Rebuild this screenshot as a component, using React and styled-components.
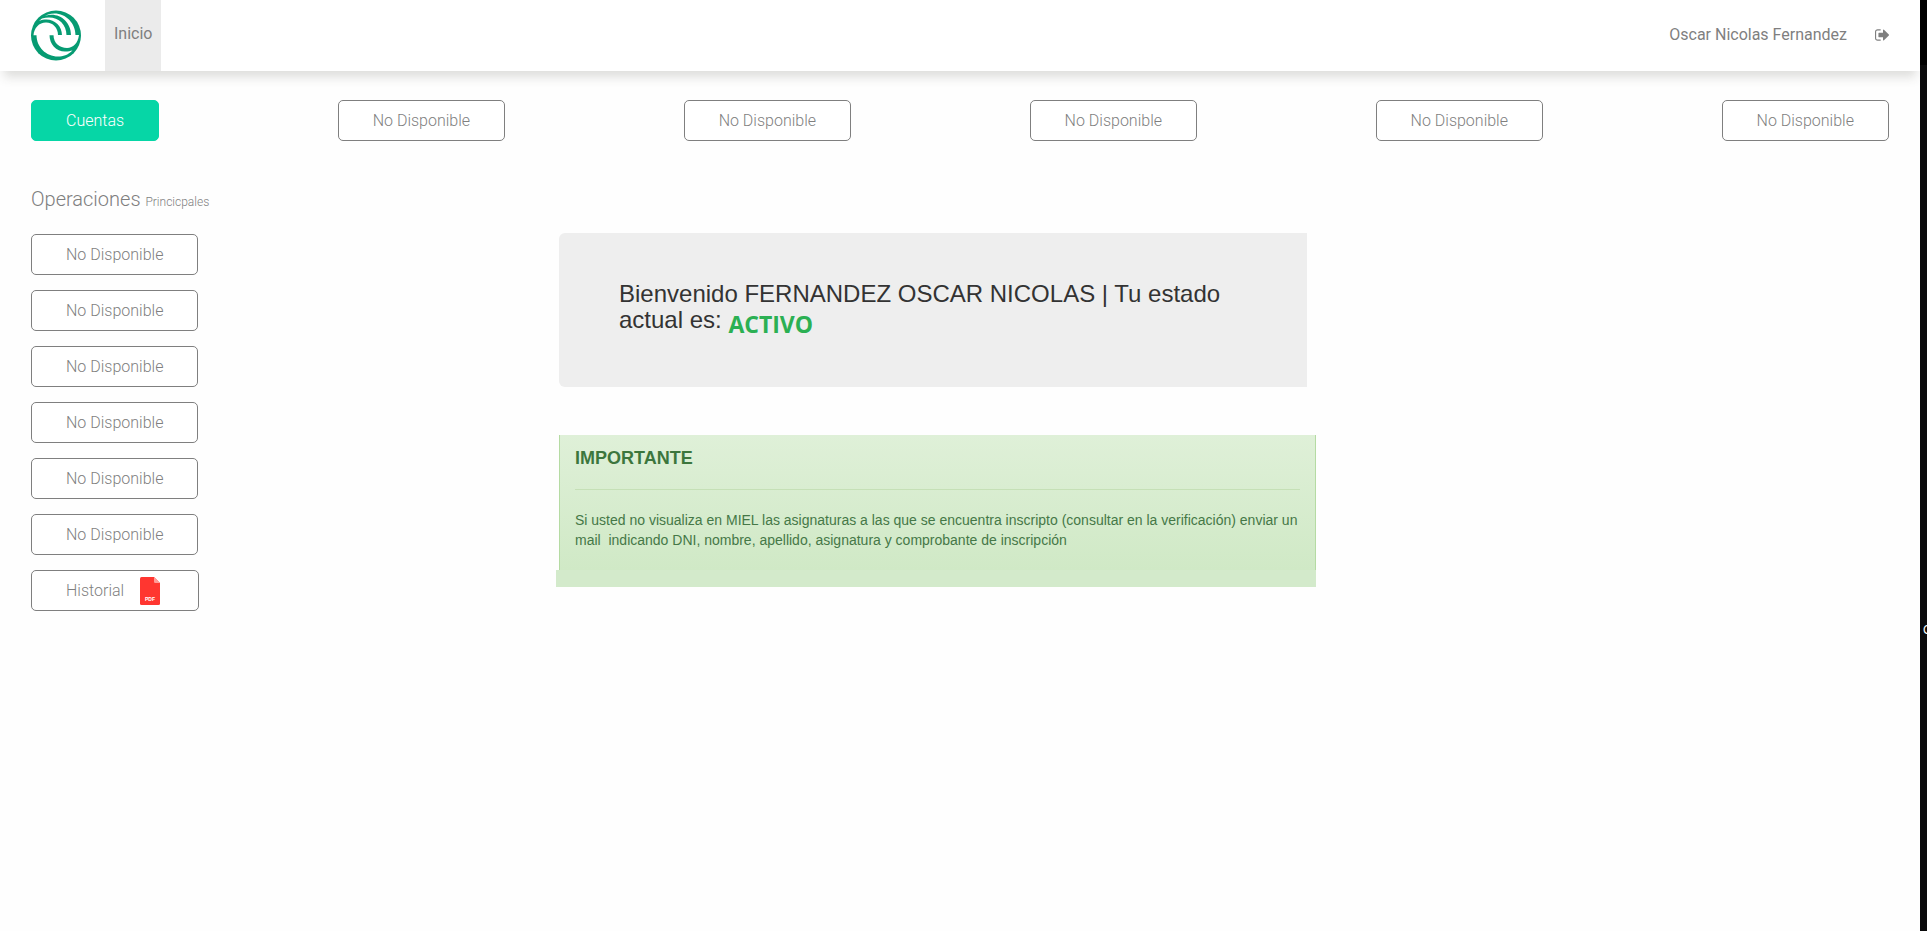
import React from "react";
import styled, { createGlobalStyle } from "styled-components";

const GlobalStyle = createGlobalStyle`
  *, *::before, *::after { box-sizing: border-box; }
  body { margin: 0; background: #fefefe; font-family: Roboto, "Liberation Sans", sans-serif; font-size: 16px; color: #7f7f7f; }
  h1, h2, p { margin: 0; font-weight: inherit; }
`;

const Screen = styled.div`
  display: grid;
  grid-template-columns: minmax(0, 1fr) 7px;
  min-height: 100vh;
`;

const Page = styled.div`
  min-width: 0;
`;

const EdgeStrip = styled.aside`
  overflow: hidden;
  padding: 620px 0 0 3px;
  background: linear-gradient(#000 65px, #0a0a0b 65px);
  color: #fff;
  font-family: "Liberation Sans", Arial, sans-serif;
  font-size: 12px;
  line-height: 20px;
`;

const Header = styled.header`
  display: flex;
  align-items: stretch;
  height: 71px;
  padding: 0 31px;
  background: #fff;
  box-shadow: 0 10px 10px -4px rgba(60, 60, 50, 0.17);
`;

const LogoLink = styled.a`
  display: flex;
  align-items: center;
  margin-right: 24px;
`;

const NavLink = styled.a`
  display: flex;
  align-items: center;
  padding: 0 9px 4px;
  background: ${(p) => (p.$active ? "#ebebeb" : "transparent")};
  color: inherit;
  text-decoration: none;
`;

const Session = styled.div`
  display: flex;
  align-items: center;
  gap: 28px;
  margin-left: auto;
  padding-bottom: 2px;
`;

const IconButton = styled.button`
  display: flex;
  padding: 0;
  border: 0;
  background: none;
  color: inherit;
  cursor: pointer;
`;

const Tabs = styled.nav`
  display: flex;
  justify-content: space-between;
  padding: 29px 31px 0;
`;

const Button = styled.button`
  display: flex;
  align-items: center;
  gap: 12px;
  height: 41px;
  padding: 0 34px;
  border: 1px solid ${(p) => (p.$primary ? "#06d6a6" : "#7f7f7f")};
  border-radius: 5px;
  background: ${(p) => (p.$primary ? "#06d6a6" : "#fff")};
  color: ${(p) => (p.$primary ? "#fff" : "#7f7f7f")};
  font: 300 16px/24px Roboto, "Liberation Sans", sans-serif;
  white-space: nowrap;
  cursor: pointer;
`;

const Body = styled.div`
  display: grid;
  grid-template-columns: 528px minmax(0, 757px);
  padding: 44px 31px 40px;
`;

const Sidebar = styled.section`
  display: flex;
  flex-direction: column;
  align-items: flex-start;
  gap: 15px;
`;

const SidebarTitle = styled.h2`
  margin-bottom: 3px;
  font-size: 20px;
  line-height: 28px;
  font-weight: 300;

  small {
    font-size: 12px;
  }
`;

const Content = styled.main`
  padding-top: 48px;
`;

const Welcome = styled.section`
  max-width: 748px;
  padding: 48px 60px 54px;
  border-radius: 6px 0 0 6px;
  background: #eee;
`;

const WelcomeText = styled.h1`
  color: #333;
  font: 400 24px/26px "Liberation Sans", Arial, sans-serif;
`;

const Status = styled.strong`
  position: relative;
  top: 5px;
  color: #2bb053;
  font-family: "Open Sans", "Noto Sans", sans-serif;
  font-size: 23px;
  font-weight: 700;
  line-height: 20px;
`;

const Notice = styled.section`
  margin-top: 48px;
  color: #3c763d;
  font-family: "Liberation Sans", Arial, sans-serif;
`;

const NoticeBody = styled.div`
  padding: 12px 15px 20px;
  border: solid #b5dba3;
  border-width: 0 1px;
  background: linear-gradient(#dff0d8, #d0e9c6);
`;

const NoticeTitle = styled.h2`
  font-size: 18px;
  line-height: 22px;
  font-weight: 700;
`;

const Divider = styled.hr`
  margin: 20px 0;
  border: 0;
  border-top: 1px solid #c5e0b6;
`;

const NoticeText = styled.p`
  color: #457847;
  font-size: 14px;
  line-height: 20px;
  white-space: pre-wrap;
`;

const NoticeFooter = styled.div`
  height: 17px;
  margin-left: -3px;
  background: #d3eacb;
`;

function Logo() {
  return (
    <svg width="50" height="51" viewBox="0 0 50 51" aria-label="Universidad" role="img">
      <circle cx="25" cy="25.5" r="25" fill="#069b72" />
      <g fill="#fff">
        <path d="M2.500 25.200C3 18 8 12.500 15 12.500C22 12.500 27 18 27 25.200Z" />
        <path d="M5.500 25H18.500C18.500 34 25 41.500 34 41.500C37 41.500 39.500 41 41.500 40.500C37 45 32 46.500 27 46.500C15 46.500 5.500 37 5.500 25Z" />
        <path d="M22.500 25H48C47 33 42 38 36 38C28.500 38 22.500 33 22.500 25Z" />
        <path d="M8 11C20 6 31 14 31 25.200H35.500C35.500 12 24 4.500 11 8.500Z" />
        <path d="M14 6C27 1.500 40 11 40 25.200H44.500C44.500 11 31 0 17 4.500Z" />
      </g>
    </svg>
  );
}

function SignOutIcon() {
  return (
    <svg width="14" height="16" viewBox="0 0 1568 1792" fill="currentColor" aria-hidden="true">
      <path d="M640 1440q0 4 1 20t.5 26.500-3 23.500-10 19.500-20.500 6.500h-320q-119 0-203.500-84.500t-84.500-203.500v-704q0-119 84.500-203.500t203.500-84.500h320q13 0 22.500 9.500t9.500 22.500q0 4 1 20t.5 26.500-3 23.500-10 19.500-20.500 6.500h-320q-66 0-113 47t-47 113v704q0 66 47 113t113 47h312l11.500 1 11.500 3 8 5.500 7 9 2 13.500zm928-544q0 26-19 45l-544 544q-19 19-45 19t-45-19-19-45v-288h-448q-26 0-45-19t-19-45v-384q0-26 19-45t45-19h448v-288q0-26 19-45t45-19 45 19l544 544q19 19 19 45z" />
    </svg>
  );
}

function PdfIcon() {
  return (
    <svg width="28" height="28" viewBox="0 0 28 28" aria-hidden="true">
      <path d="M5.500 0H18L24 6V26.500Q24 28 22.500 28H5.500Q4 28 4 26.500V1.500Q4 0 5.500 0Z" fill="#ff3630" />
      <path d="M18 0L24 6H19.200Q18 6 18 4.800Z" fill="#ff9c98" />
      <text x="14" y="23.500" textAnchor="middle" fill="#fff" fontFamily="Liberation Sans, sans-serif" fontWeight="700" fontSize="5">PDF</text>
    </svg>
  );
}

const unavailable = "No Disponible";

export default function App() {
  return (
    <>
      <GlobalStyle />
      <Screen>
        <Page>
          <Header>
            <LogoLink href="#"><Logo /></LogoLink>
            <NavLink href="#" $active>Inicio</NavLink>
            <Session>
              <span>Oscar Nicolas Fernandez</span>
              <IconButton type="button" aria-label="Salir"><SignOutIcon /></IconButton>
            </Session>
          </Header>
          <Tabs>
            <Button type="button" $primary>Cuentas</Button>
            {Array.from({ length: 5 }, (_, i) => (
              <Button type="button" key={i}>{unavailable}</Button>
            ))}
          </Tabs>
          <Body>
            <Sidebar>
              <SidebarTitle>Operaciones <small>Princicpales</small></SidebarTitle>
              {Array.from({ length: 6 }, (_, i) => (
                <Button type="button" key={i}>{unavailable}</Button>
              ))}
              <Button type="button">Historial<PdfIcon /></Button>
            </Sidebar>
            <Content>
              <Welcome>
                <WelcomeText>
                  Bienvenido FERNANDEZ OSCAR NICOLAS | Tu estado actual es: <Status>ACTIVO</Status>
                </WelcomeText>
              </Welcome>
              <Notice>
                <NoticeBody>
                  <NoticeTitle>IMPORTANTE</NoticeTitle>
                  <Divider />
                  <NoticeText>
                    {"Si usted no visualiza en MIEL las asignaturas a las que se encuentra inscripto (consultar en la verificación) enviar un mail  indicando DNI, nombre, apellido, asignatura y comprobante de inscripción"}
                  </NoticeText>
                </NoticeBody>
                <NoticeFooter />
              </Notice>
            </Content>
          </Body>
        </Page>
        <EdgeStrip>C</EdgeStrip>
      </Screen>
    </>
  );
}
